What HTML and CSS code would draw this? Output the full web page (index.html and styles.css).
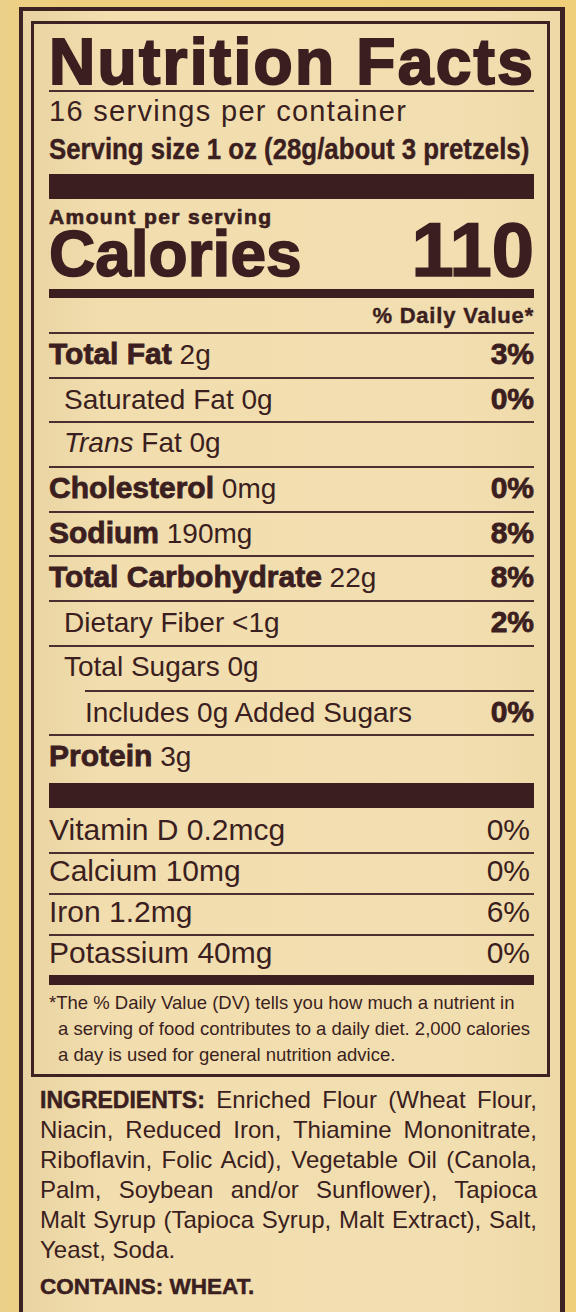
FILE: index.html
```html
<!DOCTYPE html>
<html lang="en">
<head>
    <meta charset="UTF-8">
    <meta name="viewport" content="width=device-width, initial-scale=1.0">
    <title>Nutrition Facts</title>
    <link rel="stylesheet" href="styles.css">
</head>
<body>
    <div class="package">
        <div class="label">
            <h1 class="title">Nutrition Facts</h1>
            <p class="servings">16 servings per container</p>
            <p class="serving-size">Serving size 1 oz (28g/about 3 pretzels)</p>
            <div class="bar bar-thick"></div>

            <p class="amount">Amount per serving</p>
            <div class="calories">
                <span class="cal-label">Calories</span>
                <span class="cal-value">110</span>
            </div>
            <div class="bar bar-medium"></div>

            <p class="dv-head">% Daily Value*</p>
            <div class="row"><span><b>Total Fat</b> 2g</span><b class="pct">3%</b></div>
            <div class="row sub"><span>Saturated Fat 0g</span><b class="pct">0%</b></div>
            <div class="row sub"><span><i>Trans</i> Fat 0g</span></div>
            <div class="row"><span><b>Cholesterol</b> 0mg</span><b class="pct">0%</b></div>
            <div class="row"><span><b>Sodium</b> 190mg</span><b class="pct">8%</b></div>
            <div class="row"><span><b>Total Carbohydrate</b> 22g</span><b class="pct">8%</b></div>
            <div class="row sub"><span>Dietary Fiber &lt;1g</span><b class="pct">2%</b></div>
            <div class="row sub"><span>Total Sugars 0g</span></div>
            <div class="row sub-added"><span>Includes 0g Added Sugars</span><b class="pct">0%</b></div>
            <div class="row"><span><b>Protein</b> 3g</span></div>
            <div class="bar bar-thick"></div>

            <div class="row vit vit-first"><span>Vitamin D 0.2mcg</span><span>0%</span></div>
            <div class="row vit"><span>Calcium 10mg</span><span>0%</span></div>
            <div class="row vit"><span>Iron 1.2mg</span><span>6%</span></div>
            <div class="row vit"><span>Potassium 40mg</span><span>0%</span></div>
            <div class="bar bar-small"></div>

            <p class="footnote">*The % Daily Value (DV) tells you how much a nutrient in<br>a serving of food contributes to a daily diet. 2,000 calories<br>a day is used for general nutrition advice.</p>
        </div>

        <div class="ingredients">
            <span class="line"><b>INGREDIENTS:</b> Enriched Flour (Wheat Flour,</span>
            <span class="line">Niacin, Reduced Iron, Thiamine Mononitrate,</span>
            <span class="line">Riboflavin, Folic Acid), Vegetable Oil (Canola,</span>
            <span class="line">Palm, Soybean and/or Sunflower), Tapioca</span>
            <span class="line">Malt Syrup (Tapioca Syrup, Malt Extract), Salt,</span>
            <span class="line last">Yeast, Soda.</span>
        </div>
        <p class="contains">CONTAINS: WHEAT.</p>
    </div>
</body>
</html>
```

FILE: styles.css
```css
* {
    box-sizing: border-box;
}

body {
    margin: 0;
    height: 1312px;
    overflow: hidden;
    background: linear-gradient(90deg, #ebd089 0%, #efcf7e 10%, #f0cf7b 100%);
    color: #3b1e20;
    font-family: "Liberation Sans", Arial, sans-serif;
}

p {
    margin: 0;
}

.package {
    height: 1305px;
    margin: 7px 11px 0 19px;
    padding: 10px 10px 0 8px;
    border: 4px solid #3d2224;
    border-right-width: 5px;
    border-bottom: none;
    background: linear-gradient(90deg, #e9d3a2 0%, #f1ddae 15%, #f2dfb1 80%, #eed9a7 100%);
}

.label {
    border: 3px solid #3d2224;
    padding: 10px 13px 6px 15px;
}

.title {
    margin: 0;
    font-size: 64px;
    font-weight: bold;
    letter-spacing: 2.3px;
    line-height: 56px;
    white-space: nowrap;
    -webkit-text-stroke: 2px #3b1e20;
    border-bottom: 2px solid #4a2f31;
}

.servings {
    margin-top: 2px;
    font-size: 29px;
    letter-spacing: 1.3px;
    line-height: 34px;
}

.serving-size {
    font-size: 30px;
    font-weight: bold;
    line-height: 42px;
    white-space: nowrap;
    -webkit-text-stroke: 0.4px #3b1e20;
    transform: scaleX(0.86);
    transform-origin: left center;
}

.bar {
    background: #3b1e20;
}

.bar-thick {
    height: 25px;
    margin-top: 4px;
}

.bar-medium {
    height: 9px;
    margin-top: 8px;
}

.bar-small {
    height: 10px;
}

.amount {
    margin-top: 7px;
    font-size: 21px;
    font-weight: bold;
    letter-spacing: 1.4px;
    line-height: 22px;
    -webkit-text-stroke: 0.7px #3b1e20;
}

.calories {
    display: flex;
    justify-content: space-between;
    align-items: baseline;
    height: 53px;
    font-weight: bold;
    -webkit-text-stroke: 1.6px #3b1e20;
}

.cal-label {
    font-size: 64px;
    line-height: 44px;
}

.cal-value {
    font-size: 76px;
    line-height: 44px;
}

.dv-head {
    padding: 5px 0 3px;
    text-align: right;
    font-size: 22px;
    font-weight: bold;
    letter-spacing: 0.8px;
    line-height: 26px;
    -webkit-text-stroke: 0.4px #3b1e20;
}

.row {
    display: flex;
    justify-content: space-between;
    align-items: baseline;
    height: 44.7px;
    border-top: 2px solid #4a2f31;
    font-size: 28px;
    line-height: 40px;
    white-space: nowrap;
}

.row b {
    font-size: 30px;
    -webkit-text-stroke: 0.8px #3b1e20;
}

.row.sub span {
    padding-left: 15px;
}

.row.sub-added {
    margin-left: 36px;
}

.row.vit {
    height: 41px;
    padding-right: 4px;
    font-size: 30px;
    line-height: 34px;
}

.row.vit-first {
    height: 44px;
    padding-top: 5px;
    border-top: none;
}

.footnote {
    margin-top: 5px;
    padding-left: 9px;
    text-indent: -9px;
    font-size: 18.5px;
    line-height: 26px;
}

.ingredients {
    margin: 8px 13px 0 9px;
    font-size: 24px;
    line-height: 30px;
}

.ingredients b {
    font-size: 23px;
    -webkit-text-stroke: 0.5px #3b1e20;
}

.ingredients .line {
    display: block;
    text-align: justify;
    text-align-last: justify;
}

.ingredients .line.last {
    text-align-last: left;
}

.contains {
    margin: 7px 0 0 9px;
    font-size: 22.5px;
    font-weight: bold;
    line-height: 30px;
    -webkit-text-stroke: 0.5px #3b1e20;
}
```
